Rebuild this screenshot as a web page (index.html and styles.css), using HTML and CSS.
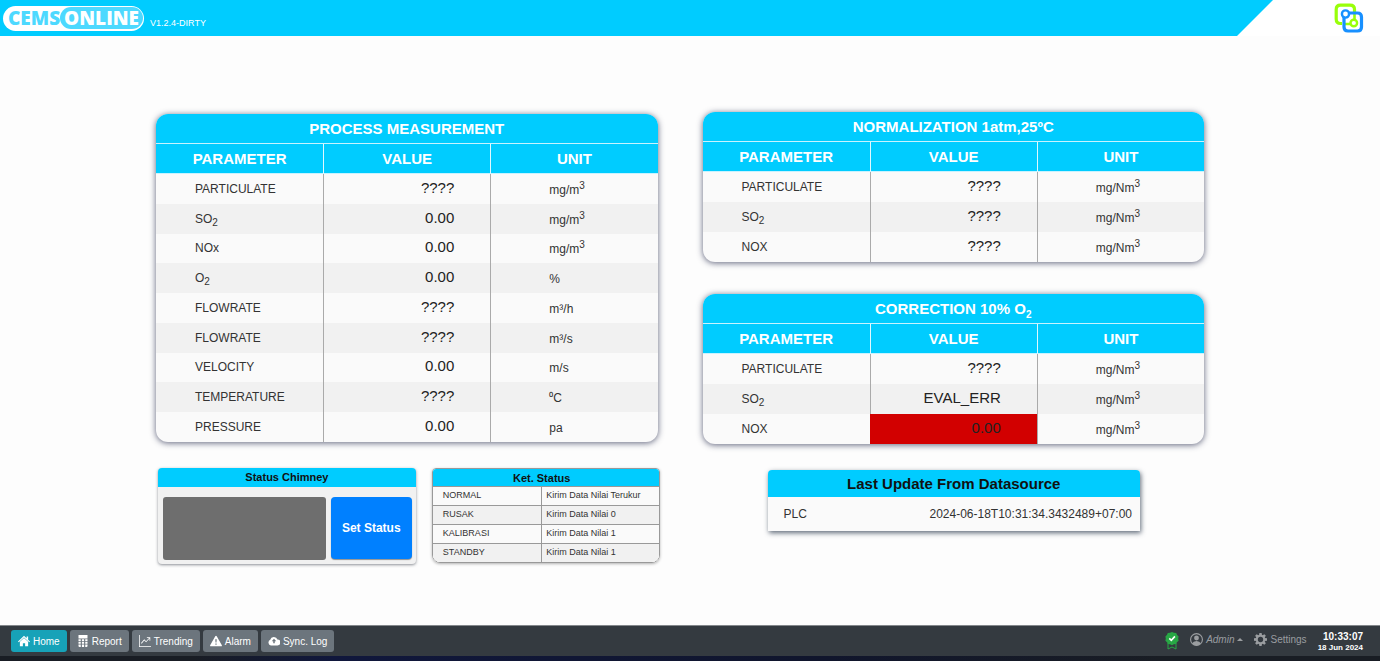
FILE: index.html
```html
<!DOCTYPE html>
<html lang="en">
<head>
<meta charset="utf-8">
<title>CEMS Online</title>
<link rel="stylesheet" href="styles.css">
</head>
<body>
<header class="topbar">
  <div class="topbar-band">
    <div class="logo"><span class="logo-cems">CEMS</span><span class="logo-online">ONLINE</span></div>
    <span class="version">V1.2.4-DIRTY</span>
  </div>
  <svg class="brand" viewBox="0 0 30 30" aria-hidden="true">
    <g fill="none" stroke-width="3.200">
      <path stroke="#99ff0a" d="M8 20.500H6.500Q2.200 20.500 2.200 16V6.500Q2.200 2.200 6.500 2.200H16Q20.500 2.200 20.500 6.500V10"/>
      <path stroke="#99ff0a" stroke-width="2.600" d="M11 21H17M20.500 11V16"/>
      <path stroke="#1890ff" d="M14 10H23.500Q27.500 10 27.500 14V24Q27.500 28 23.500 28H14Q10 28 10 24V14"/>
      <circle cx="11.500" cy="11" r="3.600" fill="#fff" stroke="#1890ff" stroke-width="2.400"/>
      <circle cx="19.800" cy="20" r="3.300" fill="#fff" stroke="#99ff0a" stroke-width="2.400"/>
    </g>
  </svg>
</header>

<main class="dashboard">
  <section class="column column-left">
    <div class="panel">
      <table class="readings readings-long">
        <thead>
          <tr><th colspan="3">PROCESS MEASUREMENT</th></tr>
          <tr><th>PARAMETER</th><th>VALUE</th><th>UNIT</th></tr>
        </thead>
        <tbody>
          <tr><td>PARTICULATE</td><td>????</td><td>mg/m<sup>3</sup></td></tr>
          <tr><td>SO<sub>2</sub></td><td>0.00</td><td>mg/m<sup>3</sup></td></tr>
          <tr><td>NOx</td><td>0.00</td><td>mg/m<sup>3</sup></td></tr>
          <tr><td>O<sub>2</sub></td><td>0.00</td><td>%</td></tr>
          <tr><td>FLOWRATE</td><td>????</td><td>m³/h</td></tr>
          <tr><td>FLOWRATE</td><td>????</td><td>m³/s</td></tr>
          <tr><td>VELOCITY</td><td>0.00</td><td>m/s</td></tr>
          <tr><td>TEMPERATURE</td><td>????</td><td>⁰C</td></tr>
          <tr><td>PRESSURE</td><td>0.00</td><td>pa</td></tr>
        </tbody>
      </table>
    </div>
    <div class="status-row">
      <div class="chimney">
        <h2 class="small-title">Status Chimney</h2>
        <div class="chimney-body">
          <div class="chimney-screen"></div>
          <button class="set-status" type="button">Set Status</button>
        </div>
      </div>
      <div class="legend">
        <table class="legend-table">
          <thead><tr><th colspan="2">Ket. Status</th></tr></thead>
          <tbody>
            <tr><td>NORMAL</td><td>Kirim Data Nilai Terukur</td></tr>
            <tr><td>RUSAK</td><td>Kirim Data Nilai 0</td></tr>
            <tr><td>KALIBRASI</td><td>Kirim Data Nilai 1</td></tr>
            <tr><td>STANDBY</td><td>Kirim Data Nilai 1</td></tr>
          </tbody>
        </table>
      </div>
    </div>
  </section>

  <section class="column column-right">
    <div class="panel">
      <table class="readings">
        <thead>
          <tr><th colspan="3">NORMALIZATION 1atm,25ºC</th></tr>
          <tr><th>PARAMETER</th><th>VALUE</th><th>UNIT</th></tr>
        </thead>
        <tbody>
          <tr><td>PARTICULATE</td><td>????</td><td>mg/Nm<sup>3</sup></td></tr>
          <tr><td>SO<sub>2</sub></td><td>????</td><td>mg/Nm<sup>3</sup></td></tr>
          <tr><td>NOX</td><td>????</td><td>mg/Nm<sup>3</sup></td></tr>
        </tbody>
      </table>
    </div>
    <div class="panel">
      <table class="readings">
        <thead>
          <tr><th colspan="3">CORRECTION 10% O<sub>2</sub></th></tr>
          <tr><th>PARAMETER</th><th>VALUE</th><th>UNIT</th></tr>
        </thead>
        <tbody>
          <tr><td>PARTICULATE</td><td>????</td><td>mg/Nm<sup>3</sup></td></tr>
          <tr><td>SO<sub>2</sub></td><td>EVAL_ERR</td><td>mg/Nm<sup>3</sup></td></tr>
          <tr><td>NOX</td><td class="alert">0.00</td><td>mg/Nm<sup>3</sup></td></tr>
        </tbody>
      </table>
    </div>
    <div class="update">
      <h2 class="update-title">Last Update From Datasource</h2>
      <div class="update-row"><span>PLC</span><span>2024-06-18T10:31:34.3432489+07:00</span></div>
    </div>
  </section>
</main>

<footer class="bottombar">
  <div class="bottombar-main">
    <nav class="nav">
      <button class="nav-button nav-active" type="button">
        <svg viewBox="0 0 16 16" class="icon"><path d="M8 1 0 8.500l1 1.200 7-6.500 7 6.500 1-1.200-2.500-2.300V2h-2v2.300z"/><path d="M8 4 2.500 9V15h4v-4h3v4h4V9z"/></svg>Home</button>
      <button class="nav-button" type="button">
        <svg viewBox="0 0 16 16" class="icon"><path fill-rule="evenodd" d="M2 0h12v4.500H2zM2 5.500h3v2.500H2zM6.500 5.500h3v2.500h-3zM11 5.500h3v2.500h-3zM2 9h3v2.500H2zM6.500 9h3v2.500h-3zM11 9h3v2.500h-3zM2 12.500h3V16H3.500Q2 16 2 14.500zM6.500 12.500h3V16h-3zM11 12.500h3v2Q14 16 12.500 16H11z"/></svg>Report</button>
      <button class="nav-button" type="button">
        <svg viewBox="0 0 16 16" class="icon"><path d="M0 0h1v15h15v1H0z"/><path d="M10.500 3H15v4.500h-1V4.800l-4.500 5L7 7.300l-3.500 4.200-.8-.7L7 5.800l2.500 2.500L13.300 4h-2.800z"/></svg>Trending</button>
      <button class="nav-button" type="button">
        <svg viewBox="0 0 16 16" class="icon"><path fill-rule="evenodd" d="M8 1q.7 0 1 .6l6.800 12q.4 1.400-.8 1.400H1q-1.200 0-.8-1.400L7 1.600Q7.300 1 8 1zM7 5.500 7.400 10h1.200L9 5.500zM7.200 11.300v1.600h1.600v-1.600z"/></svg>Alarm</button>
      <button class="nav-button" type="button">
        <svg viewBox="0 0 16 16" class="icon"><path fill-rule="evenodd" d="M4 14a4 4 0 0 1-1-7.600 5 5 0 0 1 9.600-.5A4 4 0 0 1 12.500 14zM8 5 5 8.200h2V11h2V8.200h2z"/></svg>Sync. Log</button>
    </nav>
    <div class="tools">
      <svg class="badge" viewBox="0 0 14 18" aria-hidden="true"><path d="M3 11v6l4-2 4 2v-6" fill="none" stroke="#28a745"/><path fill="#28a745" d="m7 0 2 .7 2.200.2.900 2 1.500 1.600-.4 2.100.4 2.200-1.700 1.400-1 1.900-2.100.1L7 13.200l-1.900-1-2.100-.1-1-1.900L.4 8.800l.4-2.200L.4 4.500l1.500-1.600.9-2L5 .7z"/><path d="m4.300 6.400 2 2 3.600-4" fill="none" stroke="#fff" stroke-width="1.600"/></svg>
      <button class="tool tool-user" type="button"><svg viewBox="0 0 16 16" class="tool-icon"><circle cx="8" cy="8" r="7.300" fill="none" stroke="currentColor" stroke-width="1.400"/><circle cx="8" cy="6.200" r="3"/><path d="M2.500 13Q4 9.800 8 9.800t5.500 3.200Q11 15.300 8 15.300T2.500 13z"/></svg>Admin<span class="caret"></span></button>
      <button class="tool" type="button"><svg viewBox="0 0 16 16" class="tool-icon"><circle cx="8" cy="8" r="4.600" fill="none" stroke="currentColor" stroke-width="2.600"/><path d="M6.600 0h2.800l.5 3H6.100zM6.600 16h2.800l.5-3H6.100zM0 6.600v2.800l3 .5V6.100zM16 6.600v2.800l-3 .5V6.100zM1.400 3.300l1.900-1.900 2.500 1.700-2.700 2.700zM14.600 3.300l-1.900-1.900-2.500 1.700 2.700 2.700zM1.400 12.700l1.900 1.900 2.500-1.700-2.700-2.700zM14.600 12.700l-1.900 1.900-2.500-1.700 2.700-2.700z"/></svg>Settings</button>
      <div class="clock"><time class="clock-time">10:33:07</time><time class="clock-date">18 Jun 2024</time></div>
    </div>
  </div>
</footer>
</body>
</html>
```

FILE: styles.css
```css
* {
  box-sizing: border-box;
}

body {
  margin: 0;
  min-height: 100vh;
  display: flex;
  flex-direction: column;
  background: #fdfdfd;
  color: #333;
  font-family: "Liberation Sans", Arial, sans-serif;
  font-size: 12px;
}

button {
  font-family: inherit;
  border: 0;
  cursor: pointer;
}

/* Header */
.topbar {
  display: flex;
  align-items: center;
  height: 36px;
  background: #fff;
  padding-right: 16px;
}

.topbar-band {
  flex: 1;
  display: flex;
  align-items: center;
  gap: 6px;
  height: 36px;
  padding-left: 3px;
  margin-right: 61px;
  background: #00ccff;
  clip-path: polygon(0 0, 100% 0, calc(100% - 36px) 100%, 0 100%);
}

.logo {
  display: flex;
  align-items: center;
  height: 25px;
  padding: 1px 1px 1px 5px;
  border-radius: 13px;
  background: #fff;
  font-family: "Open Sans", "Noto Sans", sans-serif;
  font-size: 19px;
  font-weight: 800;
  line-height: 22px;
}

.logo-cems {
  color: #4dd9ff;
}

.logo-online {
  height: 22px;
  padding: 0 4px;
  border-radius: 11px;
  background: #4dd9ff;
  color: #fff;
}

.version {
  padding-top: 10px;
  color: #fff;
  font-size: 9px;
}

.brand {
  width: 30px;
  height: 30px;
}

/* Dashboard */
.dashboard {
  flex: 1;
  display: grid;
  grid-template-columns: 1fr 1fr;
  gap: 45px;
  padding: 76px 176px 48px 156px;
}

.column {
  display: flex;
  flex-direction: column;
}

.column-left {
  gap: 26px;
  padding-top: 2px;
}

.column-right {
  gap: 32px;
}

.panel {
  overflow: hidden;
  border-radius: 12px;
  background: #fafafa;
  box-shadow: 0 1px 6px rgba(30, 36, 70, 0.7);
}

.readings {
  width: 100%;
  height: 150px;
  table-layout: fixed;
  border-collapse: separate;
  border-spacing: 0;
}

.readings-long {
  height: 328px;
}

.readings th {
  height: 30px;
  padding: 0;
  background: #00ccff;
  border-bottom: 1px solid #c8f3ff;
  color: #fff;
  font-size: 15px;
  line-height: 20px;
}

.readings th + th {
  border-left: 1px solid #e0f8ff;
}

.readings td {
  padding: 0 0 0 39px;
  color: #333;
  line-height: 20px;
}

.readings td + td {
  border-left: 1px solid #aaa;
}

.readings td:nth-child(2) {
  padding: 0 36px 2px 0;
  color: #222;
  font-size: 15px;
  text-align: right;
}

.readings td:nth-child(3) {
  padding: 2px 0 0 58px;
}

.readings tbody tr:nth-child(even) {
  background: #f1f1f1;
}

.readings .alert {
  background: #d20000;
  border-color: #d20000;
  color: #400;
}

sub,
sup {
  font-size: 10px;
  line-height: 0;
}

.small-title {
  margin: 0;
  background: #00ccff;
  color: #111;
  font-size: 11px;
  line-height: 19px;
  text-align: center;
}

/* Status widgets */
.status-row {
  display: flex;
  align-items: flex-start;
  gap: 16px;
  padding-left: 2px;
  margin-right: -2px;
}

.chimney {
  flex: 8;
  overflow: hidden;
  border-radius: 4px;
  background: #f1f1f1;
  box-shadow: 0 1px 3px rgba(30, 36, 50, 0.5);
}

.chimney-body {
  display: flex;
  gap: 5px;
  padding: 10px 4px 4px 5px;
}

.chimney-screen {
  flex: 2;
  height: 63px;
  border-radius: 3px;
  background: #6e6e6e;
}

.set-status {
  flex: 1;
  height: 62px;
  padding: 0;
  border-radius: 4px;
  background: #0080ff;
  box-shadow: 0 1px 1px rgba(0, 0, 0, 0.4);
  color: #fff;
  font-size: 12px;
  font-weight: bold;
}

.legend {
  flex: 7;
  overflow: hidden;
  border: 1px solid #999;
  border-radius: 4px 4px 8px 8px;
  box-shadow: 0 1px 3px rgba(0, 0, 0, 0.3);
}

.legend-table {
  width: 100%;
  border-collapse: separate;
  border-spacing: 0;
  background: #fafafa;
  font-size: 9px;
}

.legend-table th {
  height: 17px;
  padding: 0 8px 0 0;
  background: #00ccff;
  color: #111;
  font-size: 11px;
}

.legend-table td {
  height: 19px;
  padding: 0 4px 2px;
  border-top: 1px solid #999;
}

.legend-table td:first-child {
  width: 48%;
  padding-left: 10px;
}

.legend-table td + td {
  border-left: 1px solid #999;
}

.legend-table tbody tr:nth-child(even) {
  background: #f1f1f1;
}

.update {
  margin: -6px 64px 0 65px;
  border-radius: 4px 4px 0 0;
  background: #fafafa;
  box-shadow: 1px 2px 5px rgba(30, 45, 65, 0.7);
}

.update-title {
  margin: 0;
  border-radius: 4px 4px 0 0;
  background: #00ccff;
  color: #111;
  font-size: 15px;
  line-height: 27px;
  text-align: center;
}

.update-row {
  display: flex;
  justify-content: space-between;
  padding: 0 8px 0 16px;
  line-height: 34px;
}

/* Footer */
.bottombar {
  padding-bottom: 5px;
  background: linear-gradient(90deg, #191d24 0, #191d24 14%, #10173c 24%, #10152c 60%, #191d24 84%);
}

.bottombar-main {
  display: flex;
  align-items: center;
  justify-content: space-between;
  height: 31px;
  padding: 0 17px 0 11px;
  border-top: 1px solid #83878b;
  background: #343a40;
}

.nav {
  display: flex;
  gap: 3px;
}

.nav-button {
  display: flex;
  align-items: center;
  gap: 3px;
  height: 22px;
  padding: 0 7px;
  border-radius: 3px;
  background: #6c757d;
  color: #fff;
  font-size: 10px;
}

.nav-active {
  background: #17a2b8;
}

.icon {
  width: 12px;
  height: 12px;
  fill: currentColor;
}

.tools {
  display: flex;
  align-items: center;
  gap: 11px;
}

.badge {
  width: 14px;
  height: 18px;
}

.tool {
  display: flex;
  align-items: center;
  gap: 3px;
  padding: 0 0 4px;
  background: none;
  color: #9a9da0;
  font-size: 10px;
}

.tool-user {
  font-style: italic;
}

.tool-icon {
  width: 13px;
  height: 13px;
  fill: currentColor;
}

.caret {
  border: 3px solid transparent;
  border-top: 0;
  border-bottom-color: currentColor;
}

.clock {
  display: flex;
  flex-direction: column;
  align-items: flex-end;
  color: #fff;
}

.clock-time {
  font-size: 10px;
  font-weight: bold;
  line-height: 12px;
}

.clock-date {
  font-size: 8px;
  font-weight: bold;
  line-height: 9px;
}
```
